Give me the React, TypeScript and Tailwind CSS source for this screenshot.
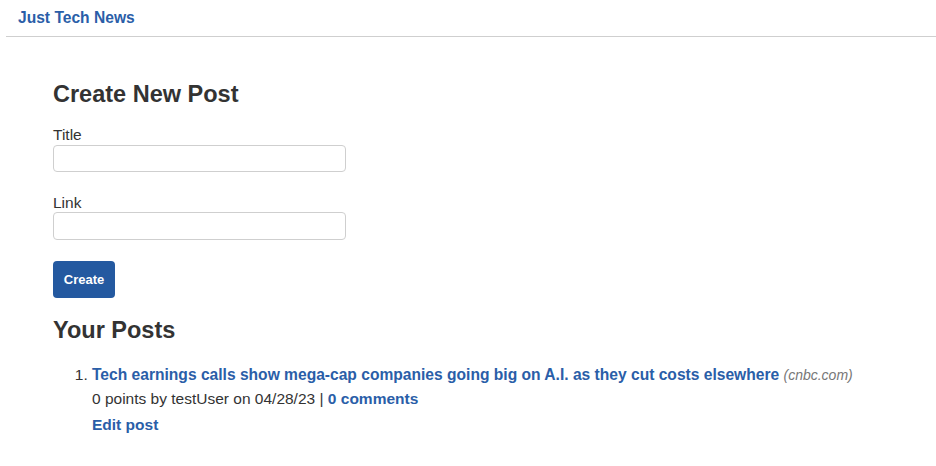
export default function App() {
  return (
    <div className="min-h-screen bg-white font-['Liberation_Sans',Arial,sans-serif] text-[#333]">
      <header className="ml-[6px] flex h-[37px] items-center border-b border-[#cfcfcf] pl-3">
        <a href="#" className="text-[15.6px] font-bold text-[#2a5ea8]">
          Just Tech News
        </a>
      </header>

      <main className="px-[53px] pt-[42px]">
        <h2 className="text-[23.5px] font-bold leading-[30px]">Create New Post</h2>

        <form className="mt-[17px] flex flex-col">
          <label htmlFor="title" className="text-[15.5px] leading-[18px]">
            Title
          </label>
          <input
            id="title"
            type="text"
            className="mt-[1px] h-[27px] w-[293px] rounded-[4px] border border-[#cfcfcf] px-2 text-[14px] outline-none"
          />

          <label htmlFor="link" className="mt-[22px] text-[15.5px] leading-[18px]">
            Link
          </label>
          <input
            id="link"
            type="text"
            className="h-[28px] w-[293px] rounded-[4px] border border-[#cfcfcf] px-2 text-[14px] outline-none"
          />

          <button
            type="submit"
            className="mt-[21px] h-[37px] w-[62px] rounded-[4px] bg-[#2459a0] text-[13px] font-bold text-white"
          >
            Create
          </button>
        </form>

        <h2 className="mt-[17px] text-[23.5px] font-bold leading-[30px]">Your Posts</h2>

        <ol className="mt-[18px] list-decimal pl-[39px] text-[15.5px] leading-[24px]">
          <li>
            <a href="#" className="text-[15.6px] font-bold text-[#2a5ea8]">
              Tech earnings calls show mega-cap companies going big on A.I. as they cut costs elsewhere
            </a>{' '}
            <span className="text-[14px] italic text-[#777]">(cnbc.com)</span>
            <div>
              0 points by testUser on 04/28/23 |{' '}
              <a href="#" className="font-bold text-[#2a5ea8]">
                0 comments
              </a>
            </div>
            <div className="mt-[2px]">
              <a href="#" className="font-bold text-[#2a5ea8]">
                Edit post
              </a>
            </div>
          </li>
        </ol>
      </main>
    </div>
  );
}
